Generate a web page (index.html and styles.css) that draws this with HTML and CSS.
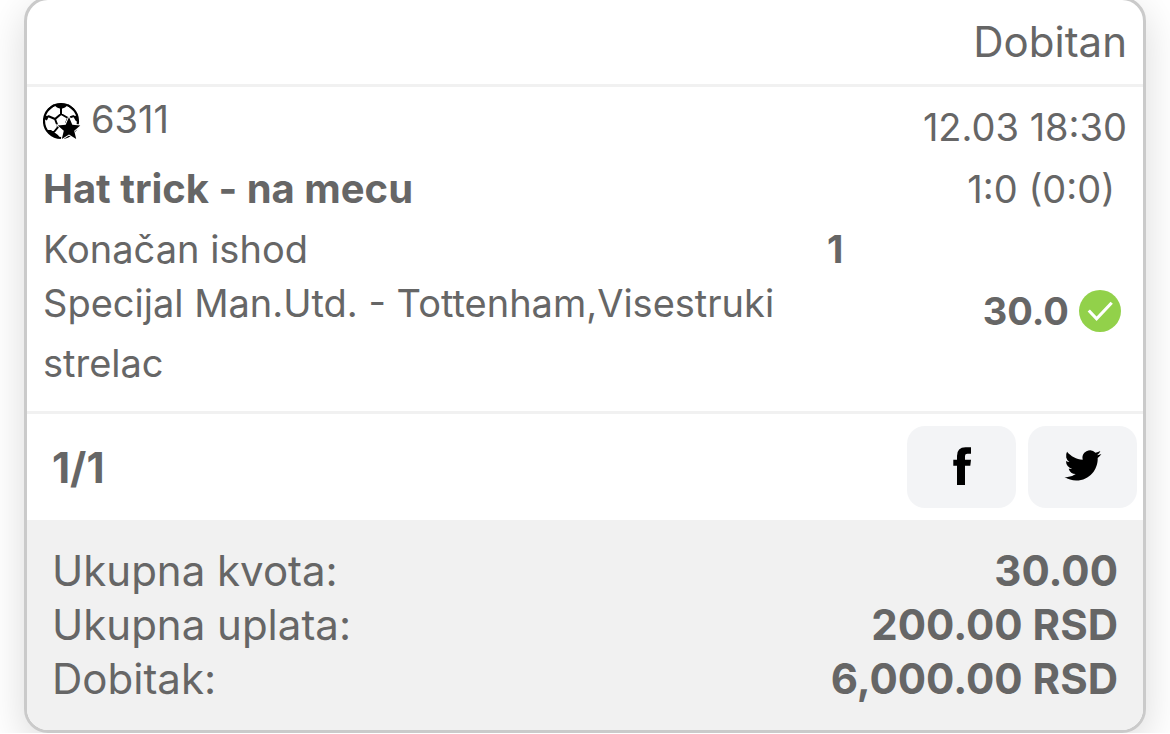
FILE: index.html
```html
<!DOCTYPE html>
<html lang="sr">
<head>
    <meta charset="utf-8" />
    <meta name="viewport" content="width=device-width, initial-scale=1" />
    <title>Tiket</title>
    <link rel="stylesheet" href="styles.css">
</head>
<body>
    <main class="ticket">
        <header class="status">Dobitan</header>

        <section class="match">
            <div class="row code-row">
                <div class="code">
                    <svg class="ball" viewBox="0 0 38 38" aria-hidden="true">
                        <circle cx="18" cy="19" r="17" fill="#fff" stroke="#000" stroke-width="2.2" />
                        <path d="M11 3q7-3 14 0l-3 2.500-4 1.500-4-1.500zM1 19l1-6 3 1.500zM35 19l-1-6-3 1.500zM4 28l4 0 7 5 2 3q-9-1-13-8z" />
                        <path d="M18 4v8M18 12l-6 5-7-3M18 12l7 4 6-2M12 17l3 8-4 5M5 14l-2 4M31 14l3 5M15 25h6M25 16l-2 5M11 3L5 8M25 3l6 5M11 30H6" fill="none" stroke="#000" stroke-width="2" />
                        <path d="M26 15l3.300 7.700 8 .700-6.100 5.300 2 8.300-7.200-4.500-7.200 4.500 2-8.300-6.100-5.300 8-.700z" stroke="#fff" stroke-width="2" paint-order="stroke" />
                    </svg>
                    <span>6311</span>
                </div>
                <time>12.03 18:30</time>
            </div>
            <div class="row">
                <h1>Hat trick - na mecu</h1>
                <span class="score">1:0 (0:0)</span>
            </div>
            <div class="row pick-row">
                <span>Konačan ishod</span>
                <strong class="pick">1</strong>
            </div>
            <div class="row">
                <p>Specijal Man.Utd. - Tottenham,Visestruki strelac</p>
                <div class="odds">
                    <strong>30.0</strong>
                    <svg class="check" viewBox="0 0 43 43" aria-label="Dobitan">
                        <circle cx="21.5" cy="21.5" r="21.5" fill="#92d14a" />
                        <path d="M10 21l8 8.500 15.500-16.500" fill="none" stroke="#fff" stroke-width="3.2" />
                    </svg>
                </div>
            </div>
        </section>

        <section class="share">
            <strong>1/1</strong>
            <div class="buttons">
                <button type="button" aria-label="Facebook">
                    <svg viewBox="0 0 40 40" aria-hidden="true"><path d="M15 38V18.700h-3.700v-6H15V9q0-8.700 8.500-8.700H29v6.400h-3.600q-2.400 0-2.400 2.300v3.700h6l-.700 6H23V38z" /></svg>
                </button>
                <button type="button" aria-label="Twitter">
                    <svg viewBox="-1 0 26 26" aria-hidden="true"><path d="M23.950 4.570a10 10 0 0 1-2.820.770 4.960 4.960 0 0 0 2.160-2.720c-.950.550-2.010.960-3.130 1.180a4.920 4.920 0 0 0-8.380 4.480C7.690 8.090 4.070 6.130 1.640 3.160a4.920 4.920 0 0 0 1.520 6.570 4.900 4.900 0 0 1-2.230-.610v.060a4.920 4.920 0 0 0 3.950 4.830 5 5 0 0 1-2.210.080 4.940 4.940 0 0 0 4.600 3.420A9.870 9.870 0 0 1 0 19.540a13.990 13.990 0 0 0 7.550 2.210c9.050 0 14-7.500 14-13.980 0-.210 0-.420-.020-.630a9.940 9.940 0 0 0 2.420-2.570z" /></svg>
                </button>
            </div>
        </section>

        <dl class="totals">
            <div><dt>Ukupna kvota:</dt><dd>30.00</dd></div>
            <div><dt>Ukupna uplata:</dt><dd>200.00 RSD</dd></div>
            <div><dt>Dobitak:</dt><dd>6,000.00 RSD</dd></div>
        </dl>
    </main>
</body>
</html>
```
FILE: styles.css
```css
* {
    box-sizing: border-box;
    margin: 0;
    padding: 0;
}

body {
    padding: 0 24px;
    background-color: #fff;
    color: #666;
    font-family: Inter, sans-serif;
    font-size: 38px;
}

.ticket {
    margin-top: -3px;
    border: 3px solid #cacaca;
    border-radius: 24px;
    background-color: #fff;
    box-shadow: 0 12px 40px rgba(0, 0, 0, 0.15);
    overflow: hidden;
}

.status {
    padding: 14px 16px;
    border-bottom: 3px solid #f1f1f1;
    font-size: 42px;
    line-height: 56px;
    text-align: right;
}

.match {
    padding: 2px 16px 18px;
    border-bottom: 3px solid #f1f1f1;
    line-height: 60px;
}

.row {
    display: flex;
    justify-content: space-between;
}

.code-row {
    padding-bottom: 2px;
}

.code {
    display: flex;
    align-items: center;
    align-self: flex-start;
    gap: 10px;
}

.ball {
    width: 38px;
    height: 38px;
    margin-top: 4px;
}

time {
    padding-top: 8px;
}

h1 {
    font-size: 40px;
}

.score {
    padding-right: 12px;
}

.pick-row {
    padding-top: 6px;
    line-height: 48px;
}

.pick {
    width: 300px;
}

p {
    width: 68%;
}

.odds {
    display: flex;
    align-items: center;
    align-self: flex-start;
    gap: 10px;
    padding: 8px 6px 0 0;
}

.check {
    width: 42px;
    height: 42px;
}

.share {
    display: flex;
    align-items: center;
    justify-content: space-between;
    padding: 12px 6px 12px 25px;
    font-size: 42px;
}

.buttons {
    display: flex;
    gap: 12px;
}

button {
    display: grid;
    place-items: center;
    width: 109px;
    height: 82px;
    border: 0;
    border-radius: 18px;
    background-color: #f3f4f6;
    cursor: pointer;
}

button svg {
    width: 40px;
    height: 40px;
}

.totals {
    padding: 24px 25px;
    background-color: #f1f1f1;
    font-size: 42px;
    line-height: 54px;
}

.totals div {
    display: flex;
    justify-content: space-between;
}

dd {
    font-weight: bold;
}
```
